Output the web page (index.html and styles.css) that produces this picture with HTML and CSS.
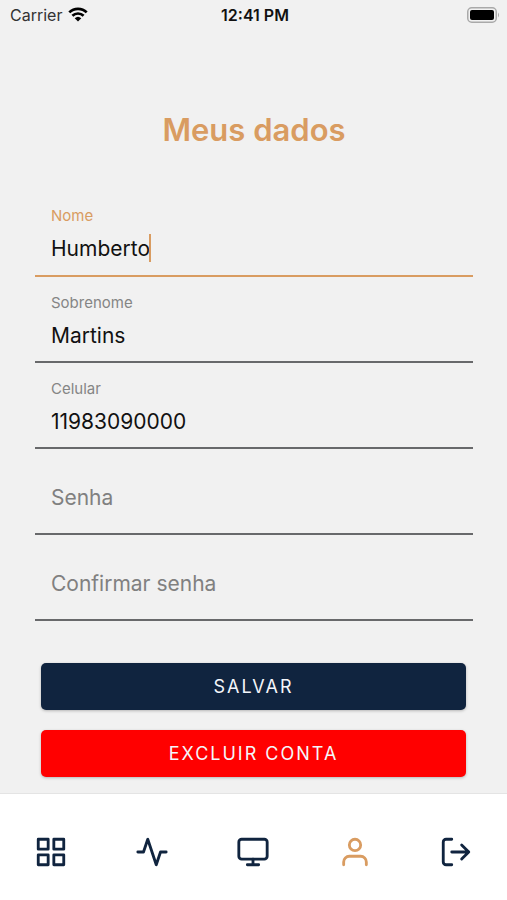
FILE: index.html
```html
<!DOCTYPE html>
<html lang="pt-BR">
<head>
  <meta charset="utf-8">
  <meta name="viewport" content="width=device-width, initial-scale=1">
  <title>Meus dados</title>
  <link rel="stylesheet" href="styles.css">
</head>
<body>
  <header class="status">
    <div class="status-carrier">
      <span>Carrier</span>
      <svg class="wifi" viewBox="0 0 20 15" aria-hidden="true">
        <path d="M1.3 5.4a12.3 12.3 0 0 1 17.4 0M4.4 8.8a8 8 0 0 1 11.2 0" fill="none" stroke="currentColor" stroke-width="2.7"/>
        <path d="M6.7 11.2a4.8 4.8 0 0 1 6.6 0L10 14.6z" fill="currentColor"/>
      </svg>
    </div>
    <time class="status-time">12:41 PM</time>
    <svg class="battery" viewBox="0 0 33 16" aria-hidden="true">
      <rect x="0.75" y="0.75" width="28.5" height="14.5" rx="4" fill="none" stroke="#a9a9a9" stroke-width="1.5"/>
      <rect x="3" y="3" width="24" height="10" rx="2" fill="#000"/>
      <path d="M31 5.5q2 2.5 0 5z" fill="#a9a9a9"/>
    </svg>
  </header>

  <main class="content">
    <h1 class="title">Meus dados</h1>
    <form class="form">
      <div class="field field-active">
        <label for="nome">Nome</label>
        <input id="nome" type="text" value="Humberto">
        <span class="caret"></span>
      </div>
      <div class="field">
        <label for="sobrenome">Sobrenome</label>
        <input id="sobrenome" type="text" value="Martins">
      </div>
      <div class="field">
        <label for="celular">Celular</label>
        <input id="celular" type="tel" value="11983090000">
      </div>
      <div class="field field-empty">
        <input id="senha" type="password" placeholder="Senha" aria-label="Senha">
      </div>
      <div class="field field-empty">
        <input id="confirmar" type="password" placeholder="Confirmar senha" aria-label="Confirmar senha">
      </div>
      <div class="actions">
        <button class="button" type="submit">SALVAR</button>
        <button class="button button-danger" type="button">EXCLUIR CONTA</button>
      </div>
    </form>
  </main>

  <nav class="tabs">
    <a class="tab" href="#inicio" aria-label="Início">
      <svg viewBox="0 0 24 24"><rect x="3" y="3" width="7" height="7"/><rect x="14" y="3" width="7" height="7"/><rect x="14" y="14" width="7" height="7"/><rect x="3" y="14" width="7" height="7"/></svg>
    </a>
    <a class="tab" href="#atividade" aria-label="Atividade">
      <svg viewBox="0 0 24 24"><path d="M22 12h-4l-3 9L9 3l-3 9H2"/></svg>
    </a>
    <a class="tab" href="#monitor" aria-label="Monitor">
      <svg viewBox="0 0 24 24"><rect x="2" y="3" width="20" height="14" rx="2"/><path d="M8 21h8M12 17v4"/></svg>
    </a>
    <a class="tab tab-active" href="#dados" aria-label="Meus dados">
      <svg viewBox="0 0 24 24"><path d="M20 21v-2a4 4 0 0 0-4-4H8a4 4 0 0 0-4 4v2"/><circle cx="12" cy="7" r="4"/></svg>
    </a>
    <a class="tab" href="#sair" aria-label="Sair">
      <svg viewBox="0 0 24 24"><path d="M9 21H5a2 2 0 0 1-2-2V5a2 2 0 0 1 2-2h4M16 17l5-5-5-5M21 12H9"/></svg>
    </a>
  </nav>
</body>
</html>
```
FILE: styles.css
```css
* {
  box-sizing: border-box;
}

body {
  margin: 0;
  min-height: 100vh;
  display: flex;
  flex-direction: column;
  background: #f1f1f1;
  color: #111;
  font-family: Inter, "Liberation Sans", sans-serif;
}

.status {
  display: grid;
  grid-template-columns: 1fr auto 1fr;
  align-items: center;
  height: 29px;
  padding: 0 7px 0 10px;
  font-size: 16px;
}

.status-carrier {
  display: flex;
  align-items: center;
  gap: 6px;
  color: #333;
}

.wifi {
  width: 20px;
  height: 15px;
  color: #000;
}

.status-time {
  font-weight: 600;
}

.battery {
  width: 33px;
  height: 16px;
  justify-self: end;
}

.content {
  flex: 1;
  padding: 77px 34px 15px 35px;
}

.title {
  margin: 0 0 36px;
  color: #d99c61;
  font-size: 31px;
  line-height: 48px;
  font-weight: 600;
  text-align: center;
}

.field {
  position: relative;
  display: flex;
  flex-direction: column;
  height: 86px;
  padding: 17px 16px 0;
  border-bottom: 2px solid #68696b;
}

.field-active {
  height: 87px;
  border-bottom-color: #d99c61;
}

.field-empty {
  padding-top: 25px;
}

.field label {
  color: #858585;
  font-size: 15px;
  line-height: 18px;
}

.field-active label {
  color: #d99c61;
}

.field input {
  width: 100%;
  height: 46px;
  padding: 0;
  border: 0;
  outline: 0;
  background: transparent;
  color: #111;
  font: inherit;
  font-size: 21px;
}

.field-empty input::placeholder {
  color: #808080;
  opacity: 1;
}

.caret {
  position: absolute;
  left: 114px;
  top: 44px;
  width: 2px;
  height: 28px;
  background: #d99c61;
}

.actions {
  display: grid;
  gap: 20px;
  padding: 42px 7px 0 6px;
}

.button {
  height: 47px;
  border: 0;
  border-radius: 5px;
  background: #10243f;
  box-shadow: 0 1px 3px rgba(0, 0, 0, 0.25);
  color: #f4f6fa;
  font: inherit;
  font-size: 18px;
  letter-spacing: 2px;
}

.button-danger {
  background: #f00;
}

.tabs {
  display: grid;
  grid-template-columns: repeat(5, 1fr);
  align-items: center;
  height: 107px;
  padding-top: 10px;
  border-top: 1px solid #e4e4e4;
  background: #fff;
}

.tab {
  display: flex;
  justify-content: center;
  color: #10243f;
}

.tab-active {
  color: #d99c61;
}

.tab svg {
  width: 34px;
  height: 34px;
  fill: none;
  stroke: currentColor;
  stroke-width: 2;
  stroke-linecap: round;
  stroke-linejoin: round;
}
```
